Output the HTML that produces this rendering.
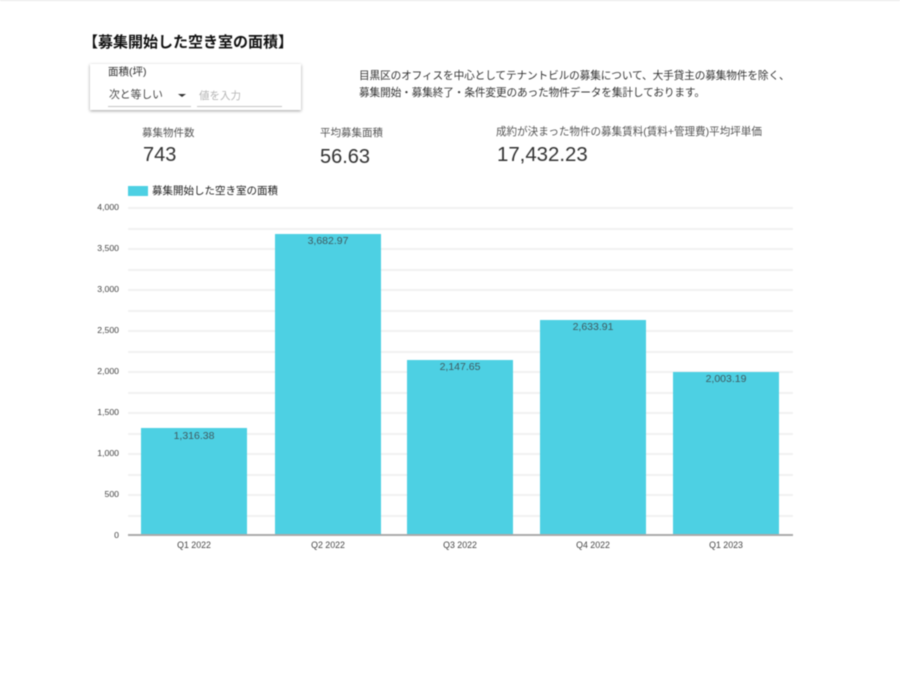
<!DOCTYPE html>
<html lang="ja">
<head>
<meta charset="utf-8">
<style>
html,body{margin:0;padding:0;background:#fff;}
body{width:900px;height:675px;overflow:hidden;position:relative;font-family:"Liberation Sans","Noto Sans CJK JP",sans-serif;}
#wrap{position:absolute;left:0;top:0;width:900px;height:675px;filter:blur(0.45px);}
.t{position:absolute;white-space:nowrap;line-height:1;}
.grid{position:absolute;left:128px;width:665px;height:2px;background:#f2f2f2;}
.bar{position:absolute;width:106px;background:#4dd0e3;}
.v{position:absolute;width:106px;text-align:center;font-size:10.5px;color:#3f5a60;line-height:1;}
.y{position:absolute;width:119px;left:0;text-align:right;font-size:8.7px;color:#444;line-height:1;}
.x{position:absolute;width:106px;text-align:center;font-size:8.8px;color:#444;line-height:1;top:541px;}
</style>
</head>
<body>
<div id="wrap">
<div style="position:absolute;left:0;top:0;width:900px;height:1px;background:#e8e8e8;"></div>

<div class="t" style="left:83px;top:35px;font-size:15px;font-weight:700;color:#111;">【募集開始した空き室の面積】</div>

<div style="position:absolute;left:90px;top:64px;width:211px;height:46px;background:#fff;box-shadow:0 1px 3px rgba(0,0,0,.38);"></div>
<div class="t" style="left:108px;top:67px;font-size:10.5px;color:#333;">面積(坪)</div>
<div class="t" style="left:109px;top:90px;font-size:10.8px;color:#444;">次と等しい</div>
<div style="position:absolute;left:178px;top:94px;width:0;height:0;border-left:4px solid transparent;border-right:4px solid transparent;border-top:3.5px solid #333;"></div>
<div style="position:absolute;left:108px;top:106px;width:83px;height:1px;background:#c4c4c4;"></div>
<div class="t" style="left:199px;top:91px;font-size:10.5px;color:#b5b5b5;">値を入力</div>
<div style="position:absolute;left:197px;top:106px;width:85px;height:1px;background:#c4c4c4;"></div>

<div class="t" style="left:359px;top:71px;font-size:10.65px;color:#333;letter-spacing:-.01em;">目黒区のオフィスを中心としてテナントビルの募集について、大手貸主の募集物件を除く、</div>
<div class="t" style="left:359px;top:88px;font-size:10.65px;color:#333;letter-spacing:-.01em;">募集開始・募集終了・条件変更のあった物件データを集計しております。</div>

<div class="t" style="left:142px;top:128px;font-size:10.5px;color:#555;">募集物件数</div>
<div class="t" style="left:143px;top:145px;font-size:20px;color:#333;">743</div>
<div class="t" style="left:320px;top:128px;font-size:10.5px;color:#555;">平均募集面積</div>
<div class="t" style="left:320px;top:147px;font-size:20px;color:#333;">56.63</div>
<div class="t" style="left:496px;top:127px;font-size:10.55px;color:#555;">成約が決まった物件の募集賃料(賃料+管理費)平均坪単価</div>
<div class="t" style="left:497px;top:145px;font-size:20.4px;color:#333;">17,432.23</div>

<div style="position:absolute;left:128px;top:186px;width:20px;height:10px;background:#4dd0e3;"></div>
<div class="t" style="left:152px;top:186px;font-size:10.5px;color:#222;">募集開始した空き室の面積</div>

<div class="grid" style="top:207px"></div>
<div class="grid" style="top:228px"></div>
<div class="grid" style="top:248px"></div>
<div class="grid" style="top:269px"></div>
<div class="grid" style="top:289px"></div>
<div class="grid" style="top:310px"></div>
<div class="grid" style="top:330px"></div>
<div class="grid" style="top:351px"></div>
<div class="grid" style="top:371px"></div>
<div class="grid" style="top:392px"></div>
<div class="grid" style="top:412px"></div>
<div class="grid" style="top:433px"></div>
<div class="grid" style="top:453px"></div>
<div class="grid" style="top:474px"></div>
<div class="grid" style="top:494px"></div>
<div class="grid" style="top:515px"></div>

<div class="y" style="top:203px">4,000</div>
<div class="y" style="top:244px">3,500</div>
<div class="y" style="top:285px">3,000</div>
<div class="y" style="top:326px">2,500</div>
<div class="y" style="top:367px">2,000</div>
<div class="y" style="top:408px">1,500</div>
<div class="y" style="top:449px">1,000</div>
<div class="y" style="top:490px">500</div>
<div class="y" style="top:531px">0</div>

<div class="bar" style="left:141px;top:428px;height:107px"></div>
<div class="bar" style="left:275px;top:234px;height:301px"></div>
<div class="bar" style="left:407px;top:360px;height:175px"></div>
<div class="bar" style="left:540px;top:320px;height:215px"></div>
<div class="bar" style="left:673px;top:372px;height:163px"></div>

<div class="v" style="left:141px;top:431px">1,316.38</div>
<div class="v" style="left:275px;top:236px">3,682.97</div>
<div class="v" style="left:407px;top:362px">2,147.65</div>
<div class="v" style="left:540px;top:322px">2,633.91</div>
<div class="v" style="left:673px;top:374px">2,003.19</div>

<div style="position:absolute;left:128px;top:534px;width:665px;height:2px;background:#aaa;"></div>

<div class="x" style="left:141px">Q1 2022</div>
<div class="x" style="left:275px">Q2 2022</div>
<div class="x" style="left:407px">Q3 2022</div>
<div class="x" style="left:540px">Q4 2022</div>
<div class="x" style="left:673px">Q1 2023</div>
</div>
</body>
</html>
